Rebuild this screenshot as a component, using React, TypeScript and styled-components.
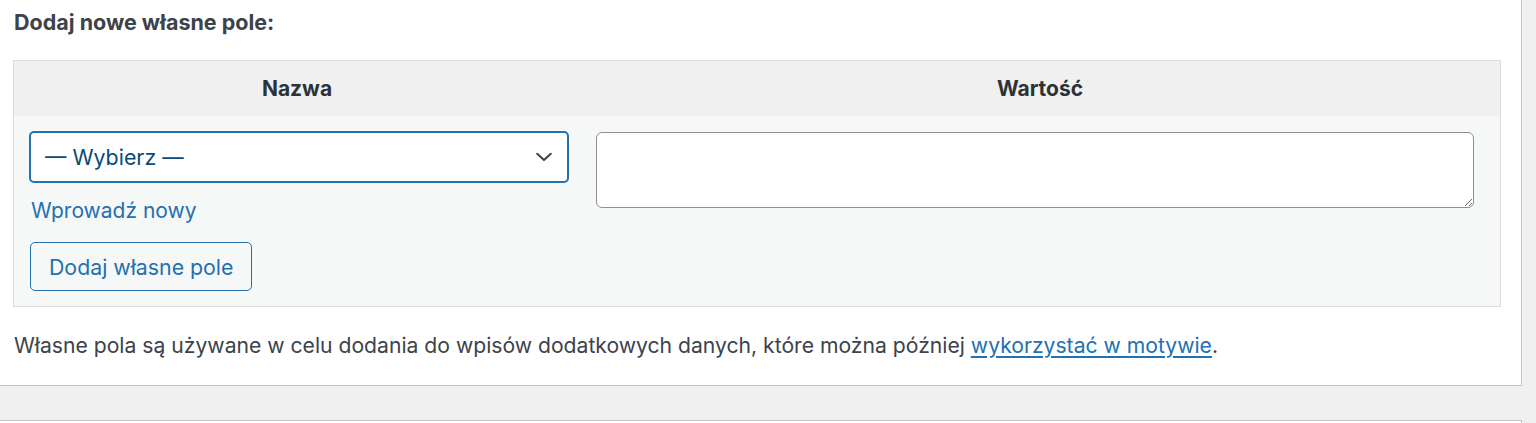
import React from "react";
import styled, { createGlobalStyle } from "styled-components";

const Global = createGlobalStyle`
  html, body { margin: 0; padding: 0; background: #f0f0f1; }
  body {
    font-family: Inter, "Liberation Sans", Arial, sans-serif;
    color: #3c434a;
    -webkit-font-smoothing: antialiased;
  }
  * { box-sizing: border-box; }
`;

const Page = styled.div`
  display: flex;
  flex-direction: column;
  gap: 34px;
  width: 1522px;
`;

const Panel = styled.section`
  background: #fff;
  border-right: 1px solid #c3c4c7;
  border-bottom: 1px solid #c3c4c7;
  padding: 8px 20px 25px 13px;
`;

const NextPanel = styled.section`
  background: #fff;
  border-top: 1px solid #c3c4c7;
  border-right: 1px solid #c3c4c7;
  height: 20px;
`;

const Heading = styled.p`
  margin: 0 0 24px 1px;
  font-size: 21.5px;
  line-height: 28px;
  font-weight: 700;
  color: #3c434a;
`;

const Table = styled.div`
  border: 1px solid #dcdcde;
  display: grid;
  grid-template-columns: 566px 1fr;
`;

const HeadCell = styled.div`
  background: #f0f0f1;
  height: 55px;
  display: flex;
  align-items: center;
  justify-content: center;
  font-size: 21px;
  font-weight: 700;
  color: #2c3338;
`;

const NameCell = styled.div`
  background: #f6f7f7;
  padding: 15px 11px 15px 15px;
  display: flex;
  flex-direction: column;
  align-items: flex-start;
`;

const ValueCell = styled.div`
  background: #f6f7f7;
  padding: 16px 26px 15px 16px;
`;

const SelectWrap = styled.div`
  position: relative;
  width: 540px;
`;

const Select = styled.select`
  appearance: none;
  -webkit-appearance: none;
  width: 100%;
  height: 52px;
  border: 2px solid #2271b1;
  border-radius: 5px;
  background: #fff;
  color: #0a4b78;
  font-family: inherit;
  font-size: 21.4px;
  padding: 0 40px 0 14px;
  outline: none;
`;

const Chevron = styled.svg`
  position: absolute;
  right: 17px;
  top: 50%;
  transform: translateY(-50%);
  pointer-events: none;
`;

const NewLink = styled.a`
  margin: 16px 0 0 2px;
  font-size: 21px;
  line-height: 24px;
  color: #2271b1;
  text-decoration: none;
`;

const Button = styled.button`
  margin: 19px 0 0 1px;
  height: 49px;
  padding: 0 18px;
  border: 1px solid #2271b1;
  border-radius: 5px;
  background: #f6f7f7;
  color: #2271b1;
  font-family: inherit;
  font-size: 21.3px;
`;

const TextArea = styled.textarea`
  display: block;
  width: 878px;
  height: 76px;
  border: 1px solid #8c8f94;
  border-radius: 6px;
  background: #fff;
  resize: vertical;
  font-family: inherit;
  font-size: 21px;
  outline: none;
`;

const Note = styled.p`
  margin: 25px 0 0 1px;
  font-size: 21.15px;
  line-height: 28px;
  color: #3c434a;
`;

const NoteLink = styled.a`
  color: #2271b1;
  text-decoration: underline;
  text-underline-offset: 3px;
`;

export default function App() {
  return (
    <>
      <Global />
      <Page>
        <Panel>
          <Heading>Dodaj nowe własne pole:</Heading>
          <Table>
            <HeadCell>Nazwa</HeadCell>
            <HeadCell>Wartość</HeadCell>
            <NameCell>
              <SelectWrap>
                <Select defaultValue="">
                  <option value="">— Wybierz —</option>
                </Select>
                <Chevron width="16" height="9" viewBox="0 0 16 9" fill="none">
                  <path d="M1.2 1.2 L8 7.6 L14.8 1.2" stroke="#3c434a" strokeWidth="2" strokeLinecap="round" strokeLinejoin="round" />
                </Chevron>
              </SelectWrap>
              <NewLink href="#">Wprowadź nowy</NewLink>
              <Button type="button">Dodaj własne pole</Button>
            </NameCell>
            <ValueCell>
              <TextArea />
            </ValueCell>
          </Table>
          <Note>
            Własne pola są używane w celu dodania do wpisów dodatkowych danych, które można później{" "}
            <NoteLink href="#">wykorzystać w motywie</NoteLink>.
          </Note>
        </Panel>
        <NextPanel />
      </Page>
    </>
  );
}
